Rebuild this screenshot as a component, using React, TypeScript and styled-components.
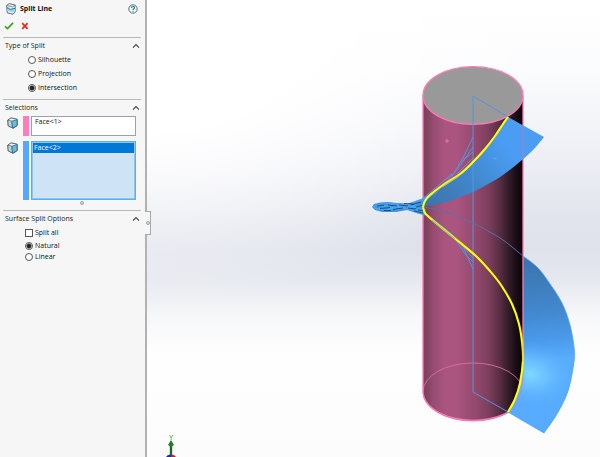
import React, { useState } from "react";
import styled, { createGlobalStyle } from "styled-components";

const GlobalStyle = createGlobalStyle`
  * { box-sizing: border-box; }
  body { margin: 0; background: #fff; }
  body, button, input { font-family: "Open Sans", "Noto Sans", sans-serif; }
`;

const Window = styled.div`
  display: flex;
  height: 100vh;
  overflow: hidden;
  font-size: 7px;
  line-height: 12px;
  color: #111;
`;

const Panel = styled.aside`
  position: relative;
  z-index: 1;
  flex: none;
  width: 147px;
  background: #f6f6f6;
  border-right: 2px solid #b2b2b2;
  padding: 0 4px 0 3px;
`;

const TitleBar = styled.header`
  display: flex;
  align-items: center;
  height: 18px;
  padding: 0 3px 0 3px;
`;

const Title = styled.h1`
  flex: 1;
  margin: 0 0 0 4px;
  font-size: 7px;
  line-height: 12px;
  font-weight: 700;
`;

const IconButton = styled.button`
  display: flex;
  padding: 0;
  border: 0;
  background: none;
`;

const Actions = styled.div`
  display: flex;
  align-items: center;
  gap: 7px;
  height: 19px;
  padding: 0 0 4px 1px;
`;

const Section = styled.section`
  border-top: 1px solid #b8b8b8;
`;

const Heading = styled.h2`
  margin: 0;
  font: inherit;
`;

const SectionHead = styled.button`
  display: flex;
  align-items: center;
  justify-content: space-between;
  width: 100%;
  height: 16px;
  padding: 0 1px 0 2px;
  border: 0;
  background: none;
  color: #222;
  font-size: 7px;
  line-height: 12px;
`;

const Options = styled.div<{ $indent: number; $gap: number }>`
  display: flex;
  flex-direction: column;
  align-items: flex-start;
  gap: ${(p) => p.$gap}px;
  padding: 0 0 6px ${(p) => p.$indent}px;
`;

const Option = styled.label<{ $spaced?: boolean }>`
  display: flex;
  align-items: center;
  gap: 2px;
  height: 11px;
  margin-bottom: ${(p) => (p.$spaced ? 2 : 0)}px;
`;

const Radio = styled.input.attrs({ type: "radio" })`
  appearance: none;
  width: 8px;
  height: 8px;
  margin: 0;
  border: 1px solid #555;
  border-radius: 50%;
  background: #fff;
  &:checked {
    background: radial-gradient(circle, #222 0 1px, #333 2px, #fff 3px);
  }
`;

const Check = styled.input.attrs({ type: "checkbox" })`
  appearance: none;
  width: 8px;
  height: 8px;
  margin: 0;
  border: 1px solid #555;
  background: #fff;
  &:checked {
    background: #333;
  }
`;

const Selections = styled.div`
  display: flex;
  flex-direction: column;
  gap: 5px;
  padding: 0 5px 0 4px;
`;

const Selection = styled.div`
  display: flex;
  align-items: flex-start;
`;

const FaceIconCell = styled.span`
  flex: none;
  width: 16px;
  padding-top: 1px;
`;

const Swatch = styled.span<{ $color: string }>`
  flex: none;
  align-self: stretch;
  width: 6px;
  margin-right: 2px;
  background: ${(p) => p.$color};
`;

const FaceList = styled.ul<{ $active?: boolean }>`
  flex: 1;
  margin: 0;
  padding: ${(p) => (p.$active ? "1px 0 0" : "0 1px")};
  list-style: none;
  height: ${(p) => (p.$active ? 59 : 20)}px;
  border: 1px solid ${(p) => (p.$active ? "#58b0ea" : "#9a9fb4")};
  box-shadow: ${(p) => (p.$active ? "inset 0 0 0 1px #8cc6ef" : "none")};
  background: ${(p) => (p.$active ? "#cfe3f7" : "#fff")};
`;

const Face = styled.li<{ $selected?: boolean }>`
  height: 10px;
  margin: 0 1px;
  padding-left: 1px;
  line-height: 10px;
  color: ${(p) => (p.$selected ? "#fff" : "#111")};
  background: ${(p) => (p.$selected ? "#0078d7" : "transparent")};
`;

const GripRow = styled.div`
  display: flex;
  justify-content: center;
  padding: 1px 0 5px 20px;
`;

const Dot = styled.span`
  width: 4px;
  height: 4px;
  border: 1px solid #a2a2a2;
  border-radius: 50%;
  background: #ddd;
`;

const PanelHandle = styled.button`
  position: absolute;
  top: 211px;
  left: 100%;
  display: flex;
  align-items: center;
  justify-content: center;
  width: 6px;
  height: 24px;
  padding: 0;
  border: 1px solid #a8a8a8;
  border-left: 0;
  background: #f6f6f6;
`;

const Viewport = styled.main`
  flex: 1;
  display: flex;
  min-width: 0;
  background:
    radial-gradient(ellipse 90% 58% at 0 8%, #fff 35%, #ffffff00 100%),
    linear-gradient(#fff 0, #fafbfc 16%, #eceef4 36%, #e1e4ec 48%, #dfe2eb 55%, #e5e8ee 61%, #f6f7f9 69%, #fefefe 77%, #fcfcfd 100%);
`;

const Scene = styled.svg`
  display: block;
  flex: 1;
  min-width: 0;
  height: 100%;
`;

const Chevron = () => (
  <svg width="8" height="6" viewBox="0 0 8 6" fill="none" stroke="#444" strokeWidth="1.100" aria-hidden="true">
    <path d="M1 4.700 4 1.500 7 4.700" />
  </svg>
);

const SplitLineIcon = () => (
  <svg width="10" height="12" viewBox="0 0 10 12" aria-hidden="true">
    <path d="M.6 2.6 3.2.6 9.2 2v6.6L7 11.3 1.2 9.8Z" fill="#e3edf3" stroke="#4d626e" strokeWidth=".9" strokeLinejoin="round" />
    <path d="M.8 2.6 6.6 3.8 9.2 2" fill="none" stroke="#6c818c" strokeWidth=".8" />
    <path d="M.9 4.8C3 4.2 3.3 6.8 5 6.2S7.500 4.7 9.1 5.6V8L7 9 1.1 7.8Z" fill="#9cd1e8" />
    <path d="M.9 5C3 4.4 3.3 7 5 6.4S7.500 4.9 9.1 5.8" fill="none" stroke="#197aa8" strokeWidth="1" />
  </svg>
);

const FaceIcon = () => (
  <svg width="11" height="12" viewBox="0 0 11 12" aria-hidden="true">
    <path d="M.8 3 4 .9 10.200 2.200V8.600L6.200 11.300 1.200 8.900Z" fill="#f0f3f5" stroke="#45525a" strokeWidth=".9" strokeLinejoin="round" />
    <path d="M.9 3.100 4.800 4.100 5.400 10.900 1.300 8.800Z" fill="#c3d3db" stroke="#45525a" strokeWidth=".6" strokeLinejoin="round" />
    <path d="M4.800 4.200 10 2.600V8.500L5.600 11Z" fill="#6bbcde" stroke="#276c8c" strokeWidth=".8" strokeLinejoin="round" />
  </svg>
);

const HelpIcon = () => (
  <svg width="10" height="10" viewBox="0 0 10 10" fill="none" aria-hidden="true">
    <circle cx="5" cy="5" r="4.200" fill="#f3f8fa" stroke="#456170" strokeWidth=".9" />
    <path d="M3.5 3.9C3.5 2 6.6 2 6.5 3.8 6.4 4.8 5 4.8 5 6M5 6.800v1" stroke="#2378a0" strokeWidth="1.100" />
  </svg>
);

type Point = [number, number];

// Bezier segments of a Catmull-Rom spline through the given points.
function spline(points: Point[]) {
  return points
    .slice(0, -1)
    .map((p1, i) => {
      const p0 = points[i - 1] ?? p1;
      const p2 = points[i + 1];
      const p3 = points[i + 2] ?? p2;
      const c1 = [p1[0] + (p2[0] - p0[0]) / 6, p1[1] + (p2[1] - p0[1]) / 6];
      const c2 = [p2[0] - (p3[0] - p1[0]) / 6, p2[1] - (p3[1] - p1[1]) / 6];
      return `C${c1.join(" ")} ${c2.join(" ")} ${p2.join(" ")}`;
    })
    .join("");
}

const UPPER_INNER: Point[] = [[423, 207], [425, 201], [430, 195], [443, 185], [460, 174], [473, 162], [485, 149], [495, 136], [503, 124], [508, 117]];
const UPPER_OUTER: Point[] = [[544, 137], [534, 149], [522, 160], [503, 175], [488, 184], [473, 192], [455, 199], [443, 203], [423, 207]];
const LOWER_INNER: Point[] = [[423, 207], [425, 213], [430, 218], [447, 232], [463, 245], [477, 257], [490, 271], [501, 285], [512, 304], [519, 324], [522, 342], [523, 360], [520, 383], [515, 399], [508, 412]];
const LOWER_OUTER: Point[] = [[523, 256], [537, 267], [548, 281], [562, 303], [570, 325], [574, 347], [574, 362], [568, 391], [557, 414], [544, 433]];
const HIDDEN_EDGE: Point[] = [[423, 207], [438, 210], [455, 215], [473, 223], [488, 231], [503, 240], [523, 256]];

const upperShape = `M508 117 544 137${spline(UPPER_OUTER)}${spline(UPPER_INNER)}Z`;
const lowerShape = `M523 256${spline(LOWER_OUTER)}L508 412 515 399 520 383 523 360Z`;

const KNOB_LINES = [
  "M373 207 384 203 398 204 412 206 436 193",
  "M374 208 388 210 404 206 421 200 452 174",
  "M376 210 392 205 408 209 428 215 454 236",
  "M375 205 391 208 410 204 430 196",
  "M380 203 395 210 413 207 426 210",
  "M386 203 401 207 424 206",
  "M384 211 401 204 423 212",
];

const HATCH = [
  "M377 206 384 205M380 208.500 390 207.500M388 205 397 206M393 209.500 403 208M399 205 408 206M408 208 416 209",
  "M411 205 421 202M416 207 424 205M414 211 423 213M384 210.500 391 210.500M404 203.500 413 204M418 210 425 211",
];

const Model = () => (
  <Scene viewBox="147 0 453 457" preserveAspectRatio="xMaxYMin meet" role="img" aria-label="Cylinder intersected by a helical surface">
    <defs>
      <linearGradient id="body" gradientUnits="userSpaceOnUse" x1="423" x2="523" y1="0" y2="0">
        <stop offset="0" stopColor="#7c4060" />
        <stop offset=".05" stopColor="#85445f" />
        <stop offset=".1" stopColor="#964c72" />
        <stop offset=".22" stopColor="#aa557f" />
        <stop offset=".34" stopColor="#aa557f" />
        <stop offset=".52" stopColor="#94496e" />
        <stop offset=".66" stopColor="#7b3e5c" />
        <stop offset=".76" stopColor="#5a2f45" />
        <stop offset=".85" stopColor="#351d2a" />
        <stop offset=".94" stopColor="#160c12" />
        <stop offset="1" stopColor="#0b0609" />
      </linearGradient>
      <linearGradient id="upper" gradientUnits="userSpaceOnUse" x1="428" y1="206" x2="505" y2="145">
        <stop offset="0" stopColor="#3d74a8" />
        <stop offset=".5" stopColor="#4186cc" />
        <stop offset="1" stopColor="#4a9df2" />
      </linearGradient>
      <linearGradient id="lower" gradientUnits="userSpaceOnUse" x1="528" y1="262" x2="545" y2="433">
        <stop offset="0" stopColor="#3b75ae" />
        <stop offset=".28" stopColor="#4187cc" />
        <stop offset=".46" stopColor="#4a9aeb" />
        <stop offset=".58" stopColor="#59adfd" />
        <stop offset="1" stopColor="#57abff" />
      </linearGradient>
      <radialGradient id="shine">
        <stop offset="0" stopColor="#7fd8ff" />
        <stop offset=".4" stopColor="#70c8ff" stopOpacity=".7" />
        <stop offset="1" stopColor="#59adfd" stopOpacity="0" />
      </radialGradient>
      <clipPath id="lowerClip">
        <path d={lowerShape} />
      </clipPath>
    </defs>

    <path d="M423 95.500V392A50 29 0 0 0 523 392V95.500Z" fill="url(#body)" />
    <ellipse cx="473" cy="392" rx="50" ry="29" fill="none" stroke="#d96fa3" strokeWidth=".9" />
    <path d="M423 392A50 29 0 0 0 508 412" fill="none" stroke="#ff78b8" strokeWidth="1.300" />

    <g clipPath="url(#lowerClip)">
      <rect x="505" y="250" width="72" height="186" fill="url(#lower)" />
      <ellipse cx="530" cy="374" rx="46" ry="32" fill="url(#shine)" transform="rotate(12 530 374)" />
    </g>
    <path d="M523 345V378C522 394 517 404 509 411" fill="none" stroke="#bd80bd" strokeWidth=".8" />
    <path d={`M523 256${spline(LOWER_OUTER)}L508 412`} fill="none" stroke="#4b9ff4" strokeWidth=".8" />

    <path d="M423 95.500V392M523 95.500V345" stroke="#ff78b8" strokeWidth="1.300" />
    <ellipse cx="473" cy="95.500" rx="50" ry="28.800" fill="#999" stroke="#ff78b8" strokeWidth="1.300" />

    <path d={upperShape} fill="url(#upper)" />
    <path d="M523 126V159" stroke="#b47cc2" strokeWidth="1" />

    <path d="M372 207 374 204 380 202.500 388 202 397 203 408 203.500 421 199 440 188 425 202 423 207 427 216 418 213.500 407 210 396 212 382 212 375 210Z" fill="#3c93e3" />
    <g fill="none" stroke="#4da9f5" strokeWidth=".8">
      {KNOB_LINES.map((d) => <path key={d} d={d} />)}
    </g>
    <g fill="none" stroke="#17395b" strokeWidth=".8">
      {HATCH.map((d) => <path key={d} d={d} />)}
    </g>

    <g fill="none" stroke="#5595dc" strokeWidth="1">
      <path d="M508 117 473 96V392L508 412" />
      <path d={`M423 207${spline(HIDDEN_EDGE)}`} stroke="#5a70a8" />
      <path d="M436 193 454 173 463 158 473 137M452 176 464 160 473 147M457 174 473 158M460 163 473 152" />
      <path d="M432 219 452 235 463 247 473 269M455 239 465 254 473 262M458 241 473 258" />
    </g>
    <path d={`M423 207${spline(UPPER_INNER)}M423 207${spline(LOWER_INNER)}`} fill="none" stroke="#ffff08" strokeWidth="2.100" />
    <path d="M442 187 459 176M432 220 455 239" stroke="#a7c77c" strokeWidth="1.100" />
    <path d="M523 340V362" stroke="#ffb02e" strokeWidth="1" />
    <path d="M447 139V143M445 141H449" stroke="#ff78b8" strokeWidth=".8" />
    <path d="M495 157V160M493 158.500H497" stroke="#58aaff" strokeWidth=".7" />

    <text x="171" y="440" fill="#2f9d35" fontSize="7" textAnchor="middle" fontFamily="Liberation Sans, sans-serif">Y</text>
    <path d="M171 446V457" stroke="#176b21" strokeWidth="2.400" />
    <path d="M171 440 174 445 171 447 168 445Z" fill="#1f7d2c" />
    <path d="M166 457Q168 454 171 455V457Z" fill="#1d28b8" />
    <path d="M171 455Q174 454 176 457H171Z" fill="#d51b24" />
  </Scene>
);

const SPLIT_TYPES = ["Silhouette", "Projection", "Intersection"];
const SURFACE_MODES = ["Natural", "Linear"];

type GroupProps = { title: string; children: React.ReactNode };

function Group({ title, children }: GroupProps) {
  const [open, setOpen] = useState(true);
  return (
    <Section>
      <Heading>
        <SectionHead type="button" aria-expanded={open} onClick={() => setOpen(!open)}>
          {title}
          <Chevron />
        </SectionHead>
      </Heading>
      {open && children}
    </Section>
  );
}

export default function App() {
  return (
    <Window>
      <GlobalStyle />
      <Panel>
        <TitleBar>
          <SplitLineIcon />
          <Title>Split Line</Title>
          <IconButton type="button" aria-label="Help"><HelpIcon /></IconButton>
        </TitleBar>
        <Actions>
          <IconButton type="button" aria-label="OK">
            <svg width="10" height="8" viewBox="0 0 10 8" fill="none" stroke="#3aa41c" strokeWidth="1.700">
              <path d="M1 4.300 3.500 6.600 9 .9" />
            </svg>
          </IconButton>
          <IconButton type="button" aria-label="Cancel">
            <svg width="8" height="8" viewBox="0 0 8 8" fill="none" stroke="#df2a1c" strokeWidth="1.700">
              <path d="M1.200 1.200 6.600 6.800M6.600 1.200 1.200 6.800" />
            </svg>
          </IconButton>
        </Actions>

        <Group title="Type of Split">
          <Options $indent={25} $gap={3}>
            {SPLIT_TYPES.map((name) => (
              <Option key={name}>
                <Radio name="split-type" defaultChecked={name === "Intersection"} />
                {name}
              </Option>
            ))}
          </Options>
        </Group>

        <Group title="Selections">
          <Selections>
            <Selection>
              <FaceIconCell><FaceIcon /></FaceIconCell>
              <Swatch $color="#ff7dbe" />
              <FaceList aria-label="Faces to split"><Face>Face&lt;1&gt;</Face></FaceList>
            </Selection>
            <Selection>
              <FaceIconCell><FaceIcon /></FaceIconCell>
              <Swatch $color="#55a8ff" />
              <FaceList $active aria-label="Splitting faces"><Face $selected>Face&lt;2&gt;</Face></FaceList>
            </Selection>
          </Selections>
          <GripRow><Dot /></GripRow>
        </Group>

        <Group title="Surface Split Options">
          <Options $indent={22} $gap={0}>
            <Option $spaced><Check />Split all</Option>
            {SURFACE_MODES.map((name) => (
              <Option key={name}>
                <Radio name="surface-mode" defaultChecked={name === "Natural"} />
                {name}
              </Option>
            ))}
          </Options>
        </Group>
        <PanelHandle type="button" aria-label="Collapse panel"><Dot /></PanelHandle>
      </Panel>
      <Viewport><Model /></Viewport>
    </Window>
  );
}
